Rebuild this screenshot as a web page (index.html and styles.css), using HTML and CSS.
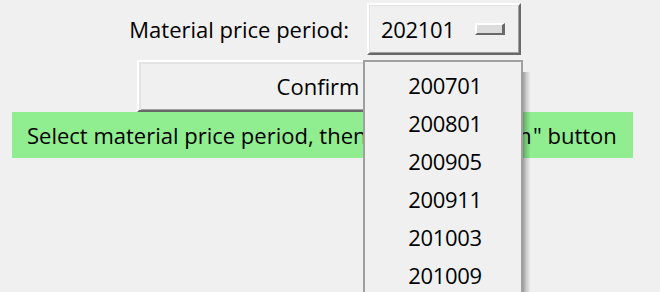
FILE: index.html
```html
<!DOCTYPE html>
<html>
<head>
<meta charset="utf-8">
<link rel="stylesheet" href="styles.css">
</head>
<body>
<div class="app">
  <div class="row-period">
    <span class="period-label">Material price period:</span>
    <div class="optmenu">
      <span class="optmenu-value">202101</span>
      <span class="optmenu-indicator"></span>
    </div>
  </div>
  <div class="row-confirm">
    <div class="btn">Confirm</div>
  </div>
  <div class="status">Select material price period, then <span class="status-mid">click "Confirm</span>" button</div>
  <div class="dropdown">
    <div class="dropdown-item">200701</div>
    <div class="dropdown-item">200801</div>
    <div class="dropdown-item">200905</div>
    <div class="dropdown-item">200911</div>
    <div class="dropdown-item">201003</div>
    <div class="dropdown-item">201009</div>
  </div>
</div>
</body>
</html>
```
FILE: styles.css
```css
html, body {
  margin: 0;
  padding: 0;
  background: #f0f0f0;
  overflow: hidden;
}
.app {
  position: relative;
  width: 660px;
  height: 292px;
  overflow: hidden;
  font-family: "Open Sans", "Noto Sans", sans-serif;
  font-size: 22px;
  color: #000;
}
.row-period {
  display: flex;
  align-items: center;
  padding-top: 3px;
  height: 52px;
}
.period-label {
  width: 349px;
  text-align: right;
  line-height: 52px;
}
.optmenu {
  margin-left: 18px;
  box-sizing: border-box;
  width: 154px;
  height: 52px;
  display: flex;
  align-items: center;
  justify-content: space-between;
  padding: 0 14px 0 12px;
  border-style: solid;
  border-width: 2px;
  border-color: #ffffff #696969 #696969 #ffffff;
  box-shadow: inset 1px 1px 0 #e3e3e3, inset -1px -1px 0 #a0a0a0;
}
.optmenu-value {
  letter-spacing: -0.3px;
}
.optmenu-indicator {
  box-sizing: border-box;
  width: 30px;
  height: 12px;
  background: #dcdcdc;
  border-style: solid;
  border-width: 2px 3px 2px 2px;
  border-color: #ffffff #696969 #696969 #ffffff;
}
.row-confirm {
  padding-top: 5px;
  padding-left: 137px;
}
.btn {
  box-sizing: border-box;
  width: 366px;
  height: 52px;
  display: flex;
  align-items: center;
  justify-content: center;
  padding-right: 4px;
  border-style: solid;
  border-width: 2px;
  border-color: #ffffff #696969 #696969 #ffffff;
  box-shadow: inset 2px 2px 0 #e3e3e3, inset -1px -1px 0 #a0a0a0;
}
.status {
  margin-left: 12px;
  width: 621px;
  height: 46px;
  box-sizing: border-box;
  padding-left: 15px;
  display: flex;
  align-items: center;
  background: #90ee90;
  white-space: pre;
}
.status-mid {
  letter-spacing: 1.4px;
}
.dropdown {
  position: absolute;
  left: 363px;
  top: 60px;
  width: 160px;
  height: 232px;
  box-sizing: border-box;
  border: 2px solid #a0a0a0;
  border-bottom: none;
  background: #f0f0f0;
  padding-top: 4px;
  padding-left: 4px;
}
.dropdown::after {
  content: "";
  position: absolute;
  top: 10px;
  right: -9px;
  width: 7px;
  bottom: 0;
  background: linear-gradient(to right, rgba(0,0,0,0.35), rgba(0,0,0,0.18) 40%, rgba(0,0,0,0.03));
}
.dropdown-item {
  height: 38px;
  display: flex;
  align-items: center;
  justify-content: center;
  letter-spacing: -0.3px;
}
```
